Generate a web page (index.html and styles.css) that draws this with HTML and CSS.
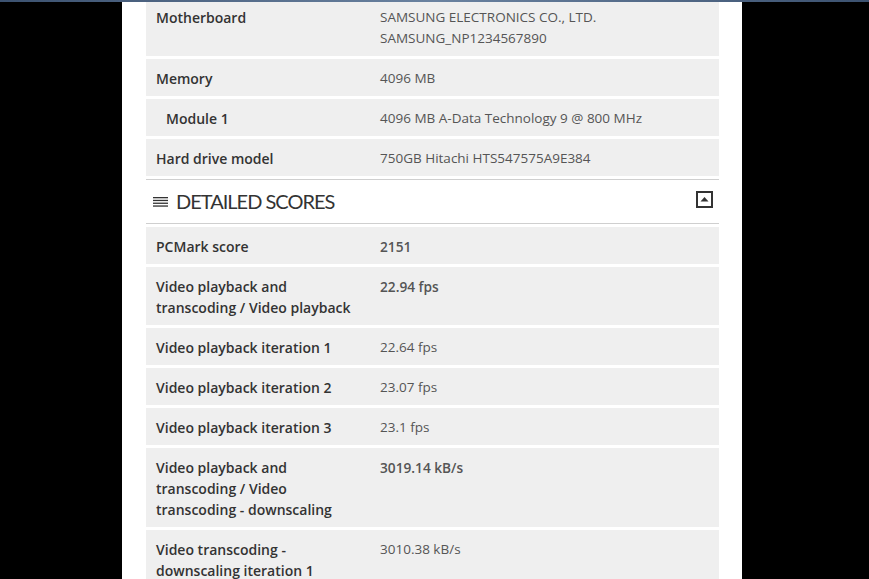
FILE: index.html
```html
<!DOCTYPE html>
<html>
<head>
<meta charset="utf-8">
<link rel="stylesheet" href="styles.css">
</head>
<body>
<div class="topbar"></div>
<div class="page">
  <div class="panel">
    <div class="list">
      <div class="row first"><div class="label">Motherboard</div><div class="value">SAMSUNG ELECTRONICS CO., LTD.<br>SAMSUNG_NP1234567890</div></div>
      <div class="row"><div class="label">Memory</div><div class="value">4096 MB</div></div>
      <div class="row"><div class="label sub">Module 1</div><div class="value">4096 MB A-Data Technology 9 @ 800 MHz</div></div>
      <div class="row"><div class="label">Hard drive model</div><div class="value">750GB Hitachi HTS547575A9E384</div></div>
      <div class="heading">
        <svg class="menu-icon" width="15" height="10" viewBox="0 0 15 10"><g fill="#333"><rect x="0" y="0" width="15" height="1.3"/><rect x="0" y="2.8" width="15" height="1.3"/><rect x="0" y="5.6" width="15" height="1.3"/><rect x="0" y="8.4" width="15" height="1.3"/></g></svg>
        <h2 class="title">DETAILED SCORES</h2>
        <svg class="collapse" width="17" height="17" viewBox="0 0 17 17"><rect x="1" y="1" width="15" height="15" fill="#fff" stroke="#333" stroke-width="2"/><polygon points="4.5,10.5 12.5,10.5 8.5,6" fill="#333"/></svg>
      </div>
      <div class="row"><div class="label">PCMark score</div><div class="value strong">2151</div></div>
      <div class="row"><div class="label">Video playback and transcoding / Video playback</div><div class="value strong">22.94 fps</div></div>
      <div class="row"><div class="label">Video playback iteration 1</div><div class="value">22.64 fps</div></div>
      <div class="row"><div class="label">Video playback iteration 2</div><div class="value">23.07 fps</div></div>
      <div class="row"><div class="label">Video playback iteration 3</div><div class="value">23.1 fps</div></div>
      <div class="row"><div class="label">Video playback and transcoding / Video transcoding - downscaling</div><div class="value strong">3019.14 kB/s</div></div>
      <div class="row"><div class="label">Video transcoding - downscaling iteration 1</div><div class="value">3010.38 kB/s</div></div>
    </div>
  </div>
</div>
</body>
</html>
```
FILE: styles.css
```css
html, body {
  margin: 0;
  padding: 0;
  background: #000;
  height: 579px;
  overflow: hidden;
}
.topbar {
  height: 2px;
  background: linear-gradient(to right, #3c5270, #6a82a0 50%, #3c5270);
}
.page {
  padding-left: 122px;
}
.panel {
  width: 573px;
  background: #fff;
  padding: 0 23px 40px 24px;
  min-height: 600px;
}
.list {
  display: flex;
  flex-direction: column;
  gap: 3px;
}
.row {
  display: grid;
  grid-template-columns: 224px 1fr;
  background: #efefef;
  padding: 9px 10px 7px 10px;
  font-family: "Open Sans", sans-serif;
  font-size: 14px;
  line-height: 21px;
}
.row.first {
  padding-top: 5px;
}
.label {
  font-weight: 600;
  color: #333;
  padding-right: 12px;
}
.label.sub {
  padding-left: 10px;
}
.value {
  color: #555;
  font-size: 13.5px;
}
.value.strong {
  font-weight: 600;
  font-size: 13.7px;
}
.heading {
  display: flex;
  align-items: center;
  height: 43px;
  border-top: 1px solid #cfcfcf;
  border-bottom: 1px solid #cfcfcf;
  padding: 0 6px 0 7px;
}
.menu-icon {
  margin-top: 1px;
  margin-right: 8px;
}
.title {
  margin: 0 0 2px 0;
  flex: 1;
  font-family: Lato, sans-serif;
  font-weight: 400;
  font-size: 20px;
  color: #333;
  letter-spacing: -1px;
}
.collapse {
  margin-top: -5px;
}
```
